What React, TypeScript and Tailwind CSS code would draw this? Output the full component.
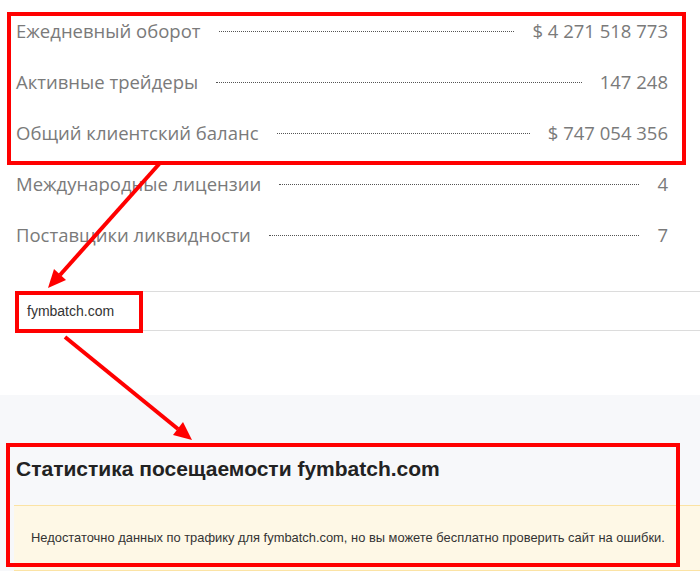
import React from "react";

const rows = [
  { label: "Ежедневный оборот", value: "$ 4 271 518 773" },
  { label: "Активные трейдеры", value: "147 248" },
  { label: "Общий клиентский баланс", value: "$ 747 054 356" },
  { label: "Международные лицензии", value: "4" },
  { label: "Поставщики ликвидности", value: "7" },
];

function Annotations() {
  return (
    <svg className="pointer-events-none absolute inset-0" width="700" height="581" viewBox="0 0 700 581">
      <g fill="none" stroke="#ff0000" strokeWidth="4">
        <rect x="9" y="14" width="675" height="149" />
        <rect x="17" y="293" width="124" height="38" />
        <rect x="8" y="445" width="670" height="120" />
      </g>
      <line x1="160" y1="163" x2="60" y2="275" stroke="#ff0000" strokeWidth="4" />
      <polygon points="48,288 66,280 54,269" fill="#ff0000" />
      <line x1="65" y1="337" x2="178" y2="429" stroke="#ff0000" strokeWidth="4" />
      <polygon points="192,440 173,435 183,422" fill="#ff0000" />
    </svg>
  );
}

export default function App() {
  return (
    <div className="relative flex h-[581px] w-[700px] flex-col overflow-hidden bg-white">
      <div className="flex flex-col pt-[5px] pb-[2px] pl-[16px] pr-[32px] font-['Open_Sans',sans-serif] text-[18.5px] text-[#7a7a7a]">
        {rows.map((r) => (
          <div key={r.label} className="flex h-[51px] items-center">
            <span className="whitespace-nowrap">{r.label}</span>
            <span className="mx-[18px] mt-[2px] flex-1 border-b border-dotted border-[#555]" />
            <span className="whitespace-nowrap">{r.value}</span>
          </div>
        ))}
      </div>

      <div className="mt-[29px] ml-[15px] flex h-[40px] items-center border-y border-[#dcdcdc] pl-[12px] font-['Liberation_Sans',Arial,sans-serif] text-[14px] text-[#333]">
        fymbatch.com
      </div>

      <div className="mt-[64px] flex flex-col gap-[24px] bg-[#f7f8fa] pt-[62px] font-['Liberation_Sans',Arial,sans-serif]">
        <h2 className="pl-[16px] text-[21px] leading-[24px] font-bold text-[#222]">
          Статистика посещаемости fymbatch.com
        </h2>
        <div className="ml-[14px] flex h-[66px] items-center border-y border-[#fbe3a4] bg-[#fef8e6] pl-[17px] text-[12.9px] text-[#333]">
          Недостаточно данных по трафику для fymbatch.com, но вы можете бесплатно проверить сайт на ошибки.
        </div>
      </div>

      <Annotations />
    </div>
  );
}
